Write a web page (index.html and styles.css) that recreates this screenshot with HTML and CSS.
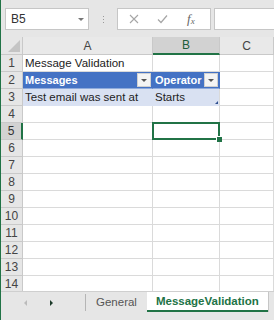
FILE: index.html
```html
<!DOCTYPE html>
<html lang="en">
<head>
  <meta charset="UTF-8">
  <title>MessageValidation - Excel</title>
  <link rel="stylesheet" href="styles.css">
</head>
<body>
  <div class="app">
    <div class="formula-bar">
      <div class="name-box">
        <span>B5</span>
        <span class="caret"></span>
      </div>
      <div class="grip"><i></i><i></i><i></i></div>
      <div class="fx-buttons">
        <svg class="fx-icon" viewBox="0 0 10 10" width="10" height="10">
          <path d="M1 1L9 9M9 1L1 9" stroke="#a6a6a6" stroke-width="1.1" fill="none"/>
        </svg>
        <svg class="fx-icon" viewBox="0 0 11 10" width="11" height="10">
          <path d="M1 5.5L4 8.5L10 1.5" stroke="#a6a6a6" stroke-width="1.2" fill="none"/>
        </svg>
        <span class="fx-label"><i>f</i><sub>x</sub></span>
      </div>
      <div class="formula-input"></div>
    </div>

    <div class="sheet">
      <div class="hdr corner"><span class="corner-mark"></span></div>
      <div class="hdr col">A</div>
      <div class="hdr col active">B</div>
      <div class="hdr col">C</div>

      <div class="hdr row">1</div>
      <div class="cell">Message Validation</div>
      <div class="cell"></div>
      <div class="cell"></div>

      <div class="hdr row">2</div>
      <div class="cell th">Messages<span class="filter"></span></div>
      <div class="cell th">Operator<span class="filter"></span></div>
      <div class="cell"></div>

      <div class="hdr row">3</div>
      <div class="cell td">Test email was sent at</div>
      <div class="cell td last">Starts</div>
      <div class="cell"></div>

      <div class="hdr row">4</div>
      <div class="cell"></div><div class="cell"></div><div class="cell"></div>

      <div class="hdr row active">5</div>
      <div class="cell"></div><div class="cell selected"></div><div class="cell"></div>

      <div class="hdr row">6</div>
      <div class="cell"></div><div class="cell"></div><div class="cell"></div>
      <div class="hdr row">7</div>
      <div class="cell"></div><div class="cell"></div><div class="cell"></div>
      <div class="hdr row">8</div>
      <div class="cell"></div><div class="cell"></div><div class="cell"></div>
      <div class="hdr row">9</div>
      <div class="cell"></div><div class="cell"></div><div class="cell"></div>
      <div class="hdr row">10</div>
      <div class="cell"></div><div class="cell"></div><div class="cell"></div>
      <div class="hdr row">11</div>
      <div class="cell"></div><div class="cell"></div><div class="cell"></div>
      <div class="hdr row">12</div>
      <div class="cell"></div><div class="cell"></div><div class="cell"></div>
      <div class="hdr row">13</div>
      <div class="cell"></div><div class="cell"></div><div class="cell"></div>
      <div class="hdr row">14</div>
      <div class="cell"></div><div class="cell"></div><div class="cell"></div>
    </div>

    <div class="tabs">
      <span class="nav prev"></span>
      <span class="nav next"></span>
      <span class="divider"></span>
      <span class="tab">General</span>
      <span class="tab current">MessageValidation</span>
    </div>
  </div>
</body>
</html>
```

FILE: styles.css
```css
body {
  margin: 0;
  font-family: "Liberation Sans", Arial, sans-serif;
  color: #222;
  overflow: hidden;
}

.app {
  width: 274px;
  height: 320px;
  box-sizing: border-box;
  border-left: 1px solid #217346;
  background-color: #e6e6e6;
  display: flex;
  flex-direction: column;
  overflow: hidden;
}

/* formula bar */
.formula-bar {
  height: 37px;
  flex-shrink: 0;
  box-sizing: border-box;
  padding-top: 8px;
  display: flex;
  align-items: flex-start;
}

.name-box {
  margin-left: 4px;
  width: 84px;
  height: 22px;
  box-sizing: border-box;
  background: #fff;
  border: 1px solid #c6c6c6;
  display: flex;
  align-items: center;
  justify-content: space-between;
  padding: 0 4px 0 5px;
  font-size: 12px;
  color: #333;
}

.caret {
  width: 0;
  height: 0;
  border-left: 3px solid transparent;
  border-right: 3px solid transparent;
  border-top: 3px solid #777;
}

.grip {
  width: 28px;
  height: 22px;
  display: flex;
  flex-direction: column;
  align-items: center;
  justify-content: center;
  gap: 2px;
}

.grip i {
  width: 1px;
  height: 1px;
  background: #999;
}

.fx-buttons {
  width: 94px;
  height: 22px;
  box-sizing: border-box;
  background: #fff;
  border: 1px solid #c6c6c6;
  display: flex;
  align-items: center;
  padding-left: 11px;
  gap: 18px;
}

.fx-label {
  font-family: "Liberation Serif", serif;
  font-size: 13px;
  color: #666;
  margin-left: 1px;
}

.fx-label sub {
  font-size: 9px;
  font-style: italic;
  vertical-align: -1px;
}

.formula-input {
  flex: 1;
  margin-left: 3px;
  height: 22px;
  box-sizing: border-box;
  background: #fff;
  border: 1px solid #c6c6c6;
  border-right: none;
}

/* grid */
.sheet {
  flex: 1;
  overflow: hidden;
  background: #fff;
  display: grid;
  grid-template-columns: 22px 130px 67px 1fr;
  grid-template-rows: 18px;
  grid-auto-rows: 17px;
  font-size: 11.5px;
}

.hdr {
  background: #e9e9e9;
  color: #444;
  box-sizing: border-box;
  border-right: 1px solid #c9c9c9;
  border-bottom: 1px solid #c9c9c9;
  display: flex;
  align-items: center;
  justify-content: center;
  font-size: 12px;
}

.hdr.corner {
  position: relative;
  background: #e6e6e6;
}

.corner-mark {
  position: absolute;
  right: 2px;
  bottom: 2px;
  width: 0;
  height: 0;
  border-left: 12px solid transparent;
  border-bottom: 12px solid #c4c4c4;
}

.hdr.col.active {
  background: #d2d2d2;
  color: #1e5e3a;
  border-bottom: 2px solid #217346;
}

.hdr.row {
  background: #e6e6e6;
}

.hdr.row.active {
  background: #d2d2d2;
  color: #333;
  border-right: 2px solid #217346;
}

.cell {
  box-sizing: border-box;
  border-right: 1px solid #dadada;
  border-bottom: 1px solid #dadada;
  padding: 0 2px;
  display: flex;
  align-items: center;
  white-space: nowrap;
  overflow: visible;
}

.cell.th {
  background: #4472c4;
  color: #fff;
  font-weight: bold;
  font-size: 11px;
  border-right-color: #4472c4;
  border-bottom-color: #8eaadb;
  justify-content: space-between;
  padding-right: 1px;
}

.filter {
  width: 14px;
  height: 14px;
  flex-shrink: 0;
  box-sizing: border-box;
  background: #f4f4f4;
  border: 1px solid #d0d0d0;
  position: relative;
}

.filter::after {
  content: "";
  position: absolute;
  left: 3px;
  top: 5px;
  border-left: 3px solid transparent;
  border-right: 3px solid transparent;
  border-top: 3px solid #555;
}

.cell.td {
  background: #d9e1f2;
  border-right-color: #d9e1f2;
  border-bottom-color: #d9e1f2;
}

.cell.td.last {
  position: relative;
  border-right-color: #dadada;
}

.cell.td.last::after {
  content: "";
  position: absolute;
  right: 1px;
  bottom: 1px;
  border-left: 3px solid transparent;
  border-bottom: 3px solid #2f4f8f;
}

.cell.selected {
  position: relative;
}

.cell.selected::before {
  content: "";
  position: absolute;
  left: -1px;
  top: -1px;
  right: -1px;
  bottom: -1px;
  border: 2px solid #217346;
}

.cell.selected::after {
  content: "";
  position: absolute;
  right: -3px;
  bottom: -3px;
  width: 5px;
  height: 5px;
  background: #217346;
  border-left: 1px solid #fff;
  border-top: 1px solid #fff;
}

/* sheet tabs */
.tabs {
  height: 29px;
  flex-shrink: 0;
  box-sizing: border-box;
  border-top: 1px solid #cfcfcf;
  display: flex;
  align-items: flex-start;
  font-size: 11.5px;
}

.nav {
  width: 0;
  height: 0;
  margin-top: 8px;
  border-top: 3px solid transparent;
  border-bottom: 3px solid transparent;
}

.nav.prev {
  margin-left: 23px;
  border-right: 3px solid #bbb;
}

.nav.next {
  margin-left: 23px;
  border-left: 3px solid #1d3b2a;
}

.divider {
  width: 1px;
  height: 17px;
  margin-top: 2px;
  margin-left: 32px;
  background: #b5b5b5;
}

.tab {
  height: 20px;
  box-sizing: border-box;
  padding: 0 10px;
  display: flex;
  align-items: center;
  color: #555;
}

.tab.current {
  background: #fff;
  color: #217346;
  font-weight: bold;
  border-bottom: 2px solid #217346;
  box-shadow: 1px 0 0 #c6c6c6;
  padding: 0 9px;
}
```
